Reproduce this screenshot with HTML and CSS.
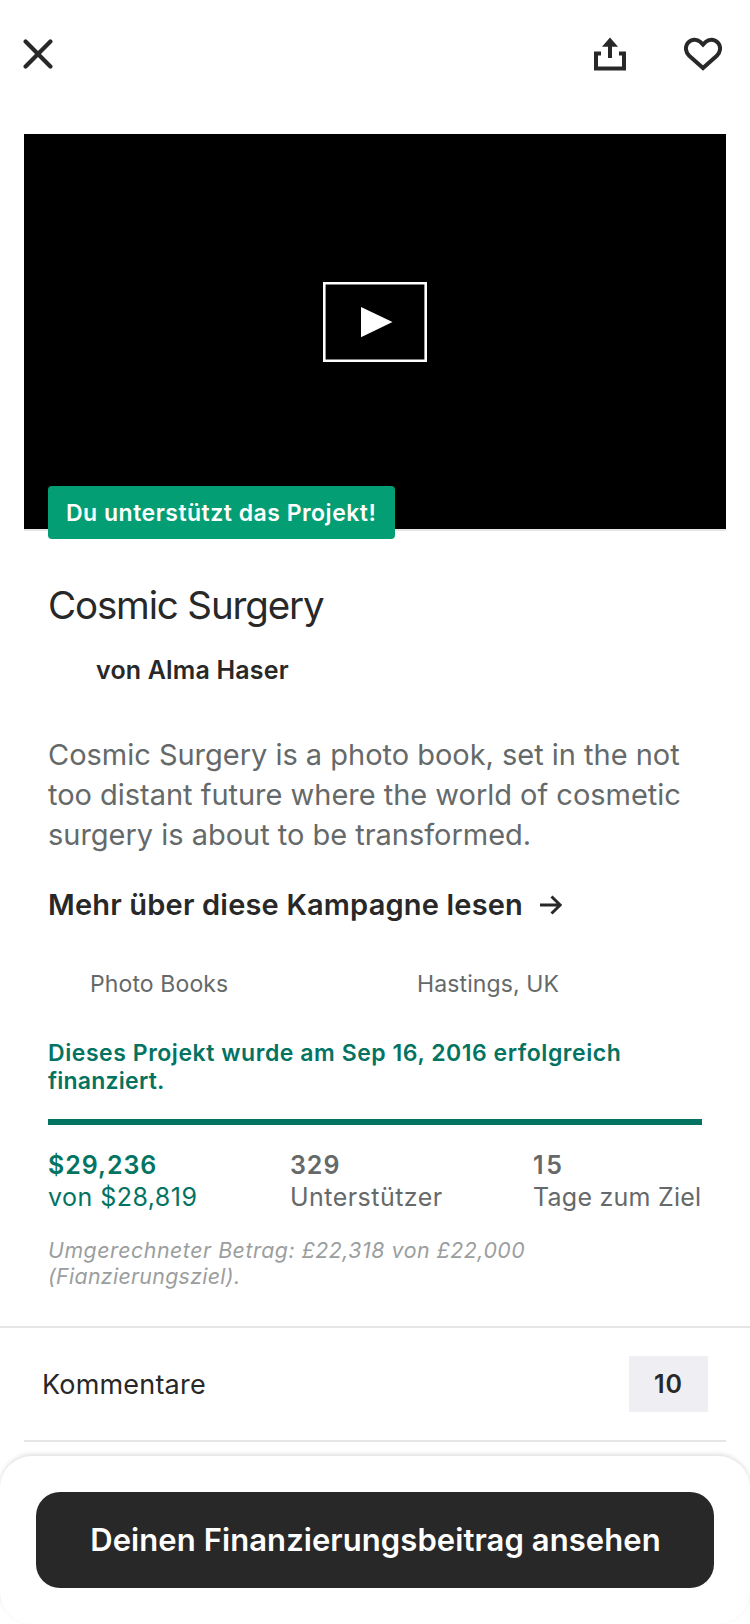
FILE: index.html
```
<!DOCTYPE html>
<html lang="de">
<head>
<meta charset="utf-8">
<title>Cosmic Surgery</title>
<link rel="stylesheet" href="styles.css">
</head>
<body>
<header class="topbar">
  <svg class="icon-close" viewBox="0 0 30 30"><path d="M2.6 2.6 27.4 27.4M27.4 2.6 2.6 27.4"/></svg>
  <div class="actions">
    <svg class="icon-share" viewBox="0 0 32 33"><path class="stroke" d="M7 15.500H2v15h28v-15h-5M16 20V8"/><path class="solid" d="M16 -.4 24 8.700H8z"/></svg>
    <svg class="icon-heart" viewBox="0 0 38 34"><path d="M19 31 5.200 18.800C1.200 15 1 9.500 3.800 6 7 1.900 12.800 1.600 16.300 4.900L19 7.600l2.700-2.700C25.200 1.600 31 1.900 34.200 6 37 9.500 36.800 15 32.800 18.800z"/></svg>
  </div>
</header>
<main>
  <div class="video">
    <svg class="play" viewBox="0 0 104 80"><path class="frame" d="M1.300 1.300h101.400v77.400H1.300z"/><path class="triangle" d="M38 25v30.300L69.500 40z"/></svg>
  </div>
  <section class="project">
    <div class="backed">Du unterstützt das Projekt!</div>
    <h1 class="title">Cosmic Surgery</h1>
    <div class="creator">von Alma Haser</div>
    <p class="blurb">Cosmic Surgery is a photo book, set in the not<br>too distant future where the world of cosmetic<br>surgery is about to be transformed.</p>
    <div class="more"><span>Mehr über diese Kampagne lesen</span><svg class="icon-arrow" viewBox="0 0 22 20"><path d="M0 10h20M11.500 1.500 20.200 10l-8.700 8.500"/></svg></div>
    <div class="tags"><span>Photo Books</span><span>Hastings, UK</span></div>
    <p class="status">Dieses Projekt wurde am Sep 16, 2016 erfolgreich<br><span class="status-end">finanziert.</span></p>
    <div class="progress"></div>
    <div class="stats">
      <div class="pledged"><b>$29,236</b><span>von $28,819</span></div>
      <div class="backers"><b>329</b><span>Unterstützer</span></div>
      <div class="days"><b>15</b><span class="days-label">Tage zum Ziel</span></div>
    </div>
    <p class="converted">Umgerechneter Betrag: £22,318 von £22,000<br><span class="converted-end">(Fianzierungsziel).</span></p>
  </section>
  <div class="comments"><span>Kommentare</span><b class="count">10</b></div>
</main>
<footer class="sheet"><button class="cta" type="button">Deinen Finanzierungsbeitrag ansehen</button></footer>
</body>
</html>
```
FILE: styles.css
```
* { box-sizing: border-box; margin: 0; }
body {
  width: 750px;
  height: 1624px;
  overflow: hidden;
  background: #fff;
  color: #282828;
  font-family: Inter, "Noto Sans", sans-serif;
}
svg { display: block; fill: none; stroke: #282828; }
b { font-weight: 600; }

.topbar {
  display: flex;
  justify-content: space-between;
  align-items: flex-start;
  height: 134px;
  padding: 37px 28px 0 23px;
}
.icon-close { width: 30px; height: 30px; margin-top: 2px; stroke-width: 4.2; stroke-linecap: round; }
.actions { display: flex; gap: 58px; }
.icon-share { width: 32px; height: 33px; margin-top: 1px; overflow: visible; }
.icon-share .stroke { stroke-width: 4; }
.icon-share .solid { fill: #282828; stroke: none; }
.icon-heart { width: 38px; height: 34px; stroke-width: 4; }

.video {
  display: flex;
  justify-content: center;
  align-items: center;
  height: 397px;
  margin: 0 24px;
  padding-bottom: 19px;
  background: #000;
  border-bottom: 2px solid #e6e6e6;
}
.play { width: 104px; height: 80px; }
.frame { stroke: #fff; stroke-width: 2.6; }
.triangle { fill: #fff; stroke: none; }

.project { display: flow-root; padding: 0 48px 37px; border-bottom: 2px solid #e6e6e6; }
.backed {
  position: relative;
  width: 347px;
  height: 53px;
  margin-top: -45px;
  padding-left: 18px;
  border-radius: 4px;
  background: #039e74;
  color: #fff;
  font-size: 23px;
  font-weight: 600;
  letter-spacing: .5px;
  line-height: 55px;
  white-space: nowrap;
}
.title { margin-top: 42px; font-size: 38.5px; font-weight: 400; letter-spacing: -1.15px; line-height: 48px; }
.creator { margin-top: 25px; padding-left: 48px; font-size: 25px; font-weight: 600; letter-spacing: .17px; line-height: 32px; }
.blurb { margin-top: 49px; color: #656969; font-size: 29px; letter-spacing: -.02px; line-height: 40px; white-space: nowrap; }
.more { display: flex; align-items: center; gap: 17px; margin-top: 30px; font-size: 29px; font-weight: 600; letter-spacing: .18px; line-height: 40px; }
.icon-arrow { width: 22px; height: 20px; stroke-width: 3; }
.tags {
  display: grid;
  grid-template-columns: 327px 1fr;
  margin-top: 43px;
  padding-left: 42px;
  color: #656969;
  font-size: 23px;
  letter-spacing: .12px;
  line-height: 32px;
}
.status { margin-top: 39px; color: #037362; font-size: 23px; font-weight: 600; letter-spacing: .55px; line-height: 28px; white-space: nowrap; }
.status-end { letter-spacing: .23px; }
.progress { height: 6px; margin-top: 24px; background: #037362; }
.stats {
  display: grid;
  grid-template-columns: 242px 242px 1fr;
  margin-top: 24px;
  color: #656969;
  font-size: 25px;
  letter-spacing: .46px;
  line-height: 32px;
  white-space: nowrap;
}
.stats div { display: flex; flex-direction: column; }
.stats b { letter-spacing: .95px; }
.pledged { color: #037362; }
.days { padding-left: 1px; }
.stats .days b { letter-spacing: 2.6px; }
.stats .days-label { letter-spacing: .24px; }
.converted { margin-top: 24px; color: #9b9e9e; font-size: 21.3px; font-style: italic; letter-spacing: .55px; line-height: 26px; }
.converted-end { letter-spacing: .33px; }

.comments {
  display: flex;
  justify-content: space-between;
  align-items: center;
  height: 114px;
  margin: 0 24px;
  padding: 0 18px;
  border-bottom: 2px solid #e6e6e6;
  font-size: 27px;
  letter-spacing: .2px;
}
.count { width: 79px; height: 56px; background: #efeef3; font-size: 25px; letter-spacing: 1px; line-height: 56px; text-align: center; }

.sheet {
  height: 168px;
  margin-top: 14px;
  padding: 36px;
  border-radius: 32px;
  background: #fff;
  box-shadow: 0 -2px 4px rgba(0, 0, 0, .12);
}
.cta {
  display: block;
  width: 678px;
  height: 96px;
  padding: 0 0 0 1px;
  border: 0;
  border-radius: 24px;
  background: #282828;
  color: #fff;
  font: 600 31px/96px Inter, "Noto Sans", sans-serif;
  letter-spacing: .08px;
}
```
